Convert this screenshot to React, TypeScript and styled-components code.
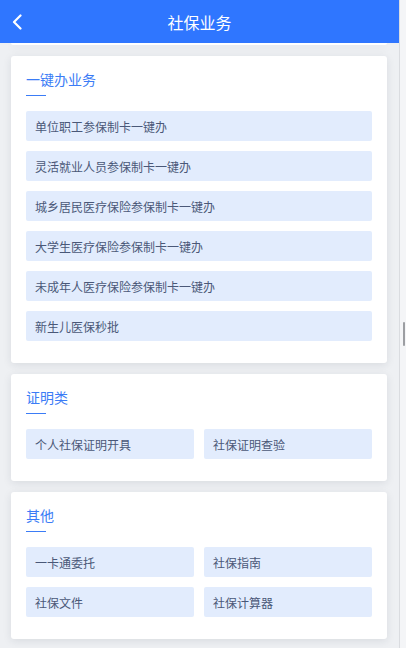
import styled, {createGlobalStyle} from "styled-components"
import {FC} from "react"

const GlobalStyle = createGlobalStyle`
  html, body {
    margin: 0;
    padding: 0;
    height: 648px;
    overflow: hidden;
    font-family: "Noto Sans CJK SC", "Noto Sans", sans-serif;
  }
`

type Section = {
  title: string
  columns: 1 | 2
  items: string[]
}

const sections: Section[] = [
  {
    title: "一键办业务",
    columns: 1,
    items: [
      "单位职工参保制卡一键办",
      "灵活就业人员参保制卡一键办",
      "城乡居民医疗保险参保制卡一键办",
      "大学生医疗保险参保制卡一键办",
      "未成年人医疗保险参保制卡一键办",
      "新生儿医保秒批",
    ],
  },
  {
    title: "证明类",
    columns: 2,
    items: ["个人社保证明开具", "社保证明查验"],
  },
  {
    title: "其他",
    columns: 2,
    items: ["一卡通委托", "社保指南", "社保文件", "社保计算器"],
  },
]

const App: FC = () => {
  return <Screen>
    <GlobalStyle />
    <Phone>
      <Header>
        <BackButton aria-label="返回">
          <svg width="10" height="16" viewBox="0 0 10 16">
            <polyline points="8.5,1.5 2,8 8.5,14.5" fill="none" stroke="#fff" strokeWidth="2.2" strokeLinecap="round" strokeLinejoin="round" />
          </svg>
        </BackButton>
        <HeaderTitle>社保业务</HeaderTitle>
      </Header>
      <Content>
        <CutCard />
        {
          sections.map((section) =>
            <Card key={section.title}>
              <CardTitle>{section.title}</CardTitle>
              <TitleLine />
              <ItemGrid $columns={section.columns}>
                {section.items.map((item) => <Item key={item}>{item}</Item>)}
              </ItemGrid>
            </Card>
          )
        }
      </Content>
    </Phone>
    <ScrollTrack>
      <ScrollThumb />
    </ScrollTrack>
  </Screen>
}

const Screen = styled.div`
  display: flex;
  width: 407px;
  height: 648px;
  overflow: hidden;
`

const Phone = styled.div`
  width: 399px;
  height: 648px;
  display: flex;
  flex-direction: column;
  background: #eef0f3;
  overflow: hidden;
`

const Header = styled.div`
  position: relative;
  z-index: 2;
  flex: 0 0 43px;
  background: #2f76ff;
  display: flex;
  align-items: center;
  justify-content: center;
`

const BackButton = styled.button`
  position: absolute;
  left: 10px;
  top: 13px;
  padding: 0 2px;
  border: 0;
  background: none;
  display: flex;
  height: 18px;
  align-items: center;
`

const HeaderTitle = styled.div`
  color: #fff;
  font-size: 16px;
  line-height: 20px;
`

const Content = styled.div`
  display: flex;
  flex-direction: column;
  gap: 11px;
  padding: 0 12px 0 11px;
`

const CutCard = styled.div`
  height: 2px;
  background: #fff;
  border-radius: 0 0 3px 3px;
  box-shadow: 0 2px 8px rgba(30, 40, 60, 0.1);
`

const Card = styled.div`
  background: #fff;
  border-radius: 3px;
  box-shadow: 0 2px 8px rgba(30, 40, 60, 0.1);
  padding: 13px 15px 22px;
`

const CardTitle = styled.div`
  color: #3b7cf6;
  font-size: 14px;
  line-height: 20px;
`

const TitleLine = styled.div`
  width: 20px;
  height: 1px;
  margin-top: 6px;
  background: #3b7cf6;
`

const ItemGrid = styled.div<{$columns: number}>`
  display: grid;
  grid-template-columns: repeat(${(p) => p.$columns}, 1fr);
  gap: 10px;
  margin-top: 15px;
`

const Item = styled.div`
  height: 30px;
  display: flex;
  align-items: center;
  padding-left: 9px;
  background: #e2ecfd;
  border-radius: 2px;
  color: #4a5878;
  font-size: 12px;
`

const ScrollTrack = styled.div`
  width: 7px;
  border-left: 1px solid #dadce0;
  background: #f4f5f7;
  display: flex;
  justify-content: flex-end;
  padding: 322px 1px 0 0;
  box-sizing: border-box;
`

const ScrollThumb = styled.div`
  width: 2px;
  height: 24px;
  background: #9c9ea2;
  border-radius: 1px;
`

export default App
